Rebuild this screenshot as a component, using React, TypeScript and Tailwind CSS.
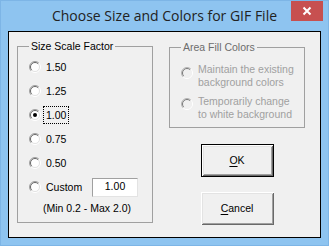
import React from "react";

const UI_FONT = "font-['Liberation_Sans',Arial,sans-serif]";

function Radio({ checked = false, disabled = false }: { checked?: boolean; disabled?: boolean }) {
  return (
    <svg width="12" height="12" viewBox="0 0 12 12" className="shrink-0">
      <circle cx="6" cy="6" r="4.5" fill={disabled ? "#f0f0f0" : "#ffffff"} />
      <path d="M2.1 9.9 A5.5 5.5 0 0 1 9.9 2.1" fill="none" stroke={disabled ? "#b4b4b4" : "#a0a0a0"} strokeWidth="1" />
      <path d="M2.8 9.2 A4.5 4.5 0 0 1 9.2 2.8" fill="none" stroke={disabled ? "#7a7a7a" : "#696969"} strokeWidth="1" />
      <path d="M9.9 2.1 A5.5 5.5 0 0 1 2.1 9.9" fill="none" stroke="#ffffff" strokeWidth="1" />
      <path d="M9.2 2.8 A4.5 4.5 0 0 1 2.8 9.2" fill="none" stroke={disabled ? "#f0f0f0" : "#e3e3e3"} strokeWidth="1" />
      {checked && <circle cx="6" cy="6" r="2" fill="#000000" />}
    </svg>
  );
}

function ScaleOption({ label, checked = false }: { label: string; checked?: boolean }) {
  return (
    <div className="flex h-[24px] items-center">
      <Radio checked={checked} />
      <span
        className={`ml-[2px] h-[18px] border px-[2px] leading-[16px] ${
          checked ? "border-dotted border-black" : "border-transparent"
        }`}
      >
        {label}
      </span>
    </div>
  );
}

function WinButton({ children, isDefault = false }: { children: React.ReactNode; isDefault?: boolean }) {
  return (
    <button
      className={`flex h-[33px] w-[73px] items-center justify-center bg-[#f0f0f0] text-black ${
        isDefault
          ? "border border-black shadow-[inset_1px_1px_#ffffff,inset_-1px_-1px_#696969,inset_2px_2px_#e3e3e3,inset_-2px_-2px_#a0a0a0]"
          : "shadow-[inset_1px_1px_#ffffff,inset_-1px_-1px_#696969,inset_2px_2px_#e3e3e3,inset_-2px_-2px_#a0a0a0]"
      }`}
    >
      {children}
    </button>
  );
}

export default function App() {
  return (
    <div className="flex h-[246px] w-[329px] flex-col overflow-hidden border border-[#7db5e6] bg-[#8ec4f0]">
      {/* Title bar */}
      <div className="relative flex h-[30px] shrink-0 items-center justify-center">
        <span className="pb-[1px] font-['Open_Sans',sans-serif] text-[14px] text-[#222222]">
          Choose Size and Colors for GIF File
        </span>
        <div className="absolute right-[5px] top-[-1px] flex h-[21px] w-[32px] items-center justify-center bg-[#c75050]">
          <svg width="10" height="10" viewBox="0 0 10 10">
            <path d="M1.5 1.5 L8.5 8.5 M8.5 1.5 L1.5 8.5" stroke="#ffffff" strokeWidth="2" />
          </svg>
        </div>
      </div>

      {/* Client area */}
      <div
        className={`ml-[7px] flex h-[207px] w-[313px] border border-black bg-[#f0f0f0] pl-[8px] pt-[8px] ${UI_FONT} text-[10.5px] text-black`}
      >
        <fieldset className="h-[183px] w-[136px] border border-[#a0a0a0] pl-[11px]">
          <legend className="px-[2px] leading-[13px]">Size Scale Factor</legend>
          <div className="mt-[2px] flex flex-col">
            <ScaleOption label="1.50" />
            <ScaleOption label="1.25" />
            <ScaleOption label="1.00" checked />
            <ScaleOption label="0.75" />
            <ScaleOption label="0.50" />
            <div className="flex h-[24px] items-center">
              <Radio />
              <span className="ml-[5px] w-[46px] leading-[16px]">Custom</span>
              <div className="flex h-[19px] w-[46px] items-center justify-center border border-b-[#e3e3e3] border-l-[#a0a0a0] border-r-[#e3e3e3] border-t-[#a0a0a0] bg-white">
                1.00
              </div>
            </div>
            <span className="ml-[14px] mt-[2px] leading-[14px]">(Min 0.2 - Max 2.0)</span>
          </div>
        </fieldset>

        <div className="ml-[16px] flex flex-col items-center pt-[1px]">
          <fieldset className="h-[87px] w-[136px] self-start border border-[#a0a0a0] pl-[11px] text-[#a0a0a0]">
            <legend className="px-[2px] leading-[13px] text-[#6d6d6d]">Area Fill Colors</legend>
            <div className="mt-[9px] flex flex-col gap-[6px]">
              <div className="flex items-start">
                <div className="mt-[4px]">
                  <Radio disabled />
                </div>
                <span className="ml-[5px] leading-[13px]">
                  Maintain the existing
                  <br />
                  background colors
                </span>
              </div>
              <div className="flex items-start">
                <div className="mt-[3px]">
                  <Radio disabled />
                </div>
                <span className="ml-[5px] leading-[13px]">
                  Temporarily change
                  <br />
                  to white background
                </span>
              </div>
            </div>
          </fieldset>

          <div className="mt-[16px] flex flex-col gap-[15px]">
            <WinButton isDefault>
              <span className="underline underline-offset-2">O</span>K
            </WinButton>
            <WinButton>
              <span className="underline underline-offset-2">C</span>ancel
            </WinButton>
          </div>
        </div>
      </div>
    </div>
  );
}
